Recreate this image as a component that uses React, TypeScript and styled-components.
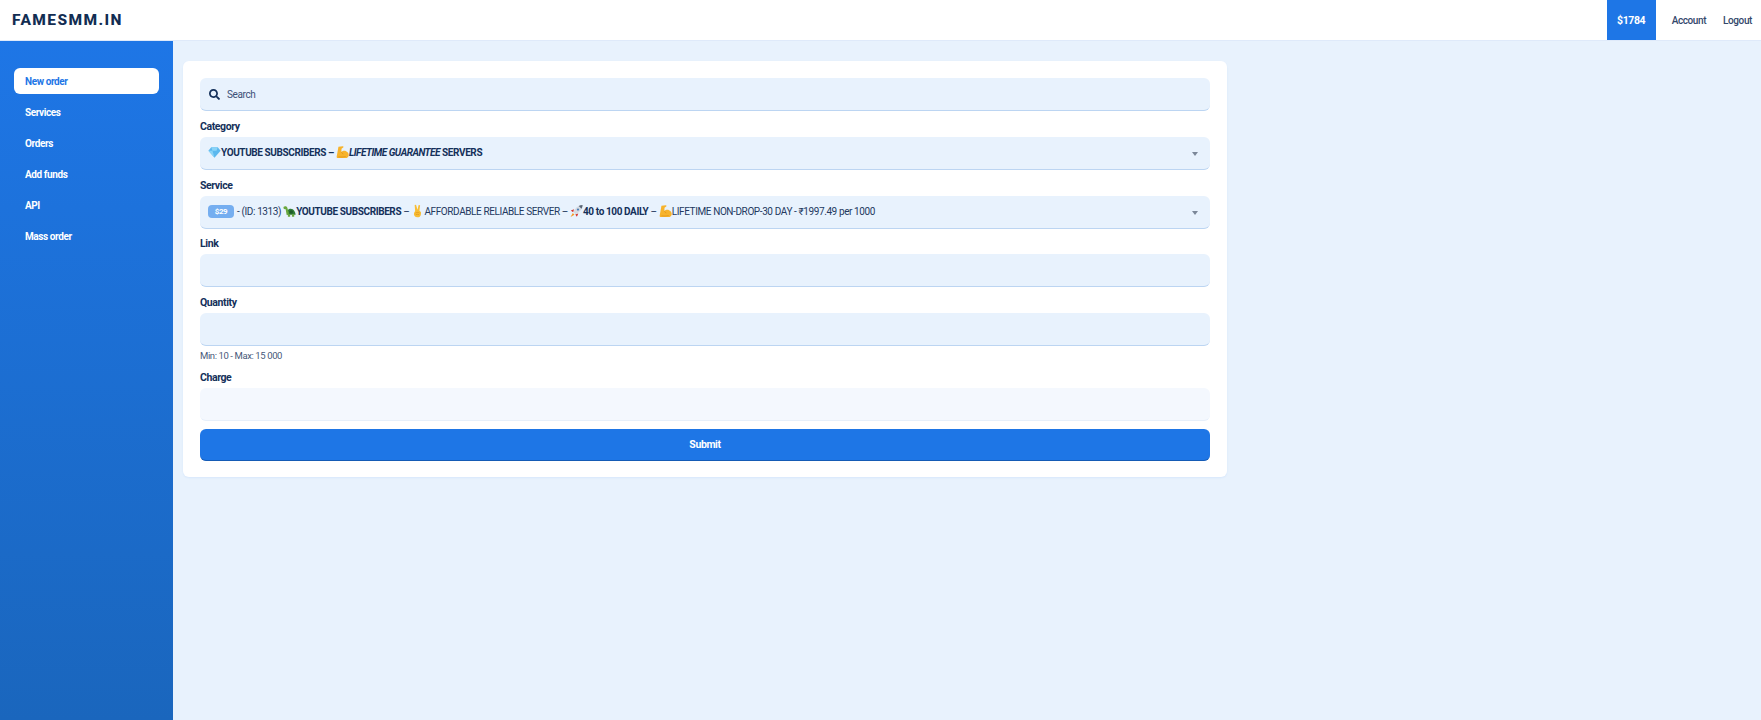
import styled, { createGlobalStyle } from 'styled-components';

const GlobalStyle = createGlobalStyle`
    html, body {
        margin: 0;
        padding: 0;
        height: 100%;
    }
    body {
        background: #e8f2fd;
        color: #14305a;
        font-family: 'Roboto', 'Noto Sans', sans-serif;
        font-size: 10px;
        letter-spacing: -0.4px;
    }
    * {
        box-sizing: border-box;
    }
`;

const Page = styled.div`
    display: flex;
    flex-direction: column;
    height: 720px;
    overflow: hidden;
`;

const Navbar = styled.header`
    display: flex;
    align-items: stretch;
    justify-content: space-between;
    height: 41px;
    background: #fff;
    border-bottom: 1px solid #dfeafa;
`;

const Logo = styled.div`
    display: flex;
    align-items: center;
    padding-left: 12px;
    font-size: 15.5px;
    font-weight: 800;
    letter-spacing: 1.4px;
    color: #122d52;
`;

const NavRight = styled.nav`
    display: flex;
    align-items: stretch;
    padding-right: 9px;
`;

const Balance = styled.div`
    display: flex;
    align-items: center;
    justify-content: center;
    width: 49px;
    background: #1e76e6;
    color: #fff;
    font-weight: 700;
    font-size: 10.5px;
`;

const NavLink = styled.a`
    display: flex;
    align-items: center;
    margin-left: ${p => (p.$last ? '17px' : '16px')};
    color: #33476b;
    font-size: 10px;
    font-weight: 500;
`;

const Body = styled.div`
    display: flex;
    flex: 1;
    min-height: 0;
`;

const Sidebar = styled.aside`
    display: flex;
    flex-direction: column;
    gap: 5px;
    width: 173px;
    padding: 27px 14px 0;
    background: linear-gradient(180deg, #1e76e6 0%, #1a66bd 100%);
`;

const SideItem = styled.a`
    display: flex;
    align-items: center;
    height: 26px;
    padding-left: 11px;
    border-radius: 6px;
    font-size: 10px;
    font-weight: 700;
    color: ${p => (p.$active ? '#1e76e6' : '#fff')};
    background: ${p => (p.$active ? '#fff' : 'transparent')};
`;

const Main = styled.main`
    flex: 1;
    padding: 20px 10px 0;
`;

const Card = styled.section`
    width: 1044px;
    padding: 17px 17px 16px;
    background: #fff;
    border-radius: 6px;
    box-shadow: 0 1px 2px rgba(30, 118, 230, 0.08);
`;

const Group = styled.div`
    margin-bottom: 6.75px;
`;

const Label = styled.label`
    display: block;
    height: 19px;
    line-height: 17px;
    font-size: 10.5px;
    font-weight: 700;
    color: #14305a;
`;

const Field = styled.div`
    display: flex;
    align-items: center;
    position: relative;
    height: 33px;
    padding: 0 8px;
    border-radius: 6px;
    background: ${p => (p.$readOnly ? '#f4f8fe' : '#e8f2fd')};
    border-bottom: 1.5px solid ${p => (p.$readOnly ? '#e6effa' : '#bcd5f2')};
    color: #24395f;
    white-space: nowrap;
`;

const SearchIcon = styled.svg`
    width: 11px;
    height: 11px;
    margin: 0 7px 0 1px;
    flex: none;
`;

const Placeholder = styled.span`
    color: #3b5076;
`;

const Caret = styled.span`
    position: absolute;
    top: 15px;
    right: 12px;
    border-style: solid;
    border-width: 4px 3px 0;
    border-color: #7b8798 transparent transparent;
`;

const Strong = styled.b`
    font-weight: 700;
    color: #14305a;
    white-space: pre;
`;

const Emph = styled.i`
    font-weight: 700;
    font-style: italic;
    letter-spacing: -0.5px;
    color: #14305a;
`;

const Badge = styled.span`
    display: inline-flex;
    align-items: center;
    justify-content: center;
    width: 26px;
    height: 13px;
    margin-right: 1px;
    border-radius: 4px;
    background: #75aef0;
    color: #fff;
    font-size: 8px;
    font-weight: 700;
`;

const Emoji = styled.svg`
    width: 13px;
    height: 14px;
    flex: none;
    margin: 0 0 1px;
`;

const Text = styled.span`
    white-space: pre;
`;

const Hint = styled.div`
    height: 16.25px;
    padding-top: 3px;
    line-height: 13px;
    font-size: 9.5px;
    color: #47597a;
`;

const Submit = styled.button`
    display: block;
    width: 100%;
    height: 32px;
    margin-top: 8px;
    border: 0;
    border-bottom: 1.5px solid #155bb5;
    border-radius: 6px;
    background: #1e76e6;
    color: #fff;
    font-family: inherit;
    font-size: 10.5px;
    letter-spacing: -0.4px;
    font-weight: 700;
`;

const Diamond = () => (
    <Emoji viewBox="0 0 16 16">
        <path d="M4 2h8l3.500 4.500L8 15 .5 6.500z" fill="#5cb8ee" />
        <path d="M4 2h8l-1.500 4.500h-5zM.5 6.500h5L8 15z" fill="#8ad3f7" />
    </Emoji>
);

const Muscle = () => (
    <Emoji viewBox="0 0 16 16">
        <path
            d="M3 1.500 8.500 1c.8 0 1 1.200.3 1.600L6.800 4 6.600 8c1.500-1.600 4-2 5.800-1 2.200 1 3.300 2.800 3.300 4.600 0 2.400-1.800 3.900-4.300 3.900H2.500c-1.200 0-1.800-.7-1.700-1.800z"
            fill="#f7b32b"
        />
        <path d="M6.400 8.200c1.200.6 2 1.400 2.400 2.600M3 14c3 .4 6 .3 9-.4" stroke="#d98a12" strokeWidth=".7" fill="none" />
    </Emoji>
);

const Turtle = () => (
    <Emoji viewBox="0 0 16 16">
        <path d="M5.500 7.500c1.800-3 6.500-3 8.500.5 1 1.700 1.500 3.200 1.500 4.500H5z" fill="#2f7a35" />
        <path d="M.5 3c1.500-1.500 4-1.200 4.700.8L7.500 11 4.500 13 3.300 5.800 1 5.500z" fill="#6aa83e" />
        <path d="M6 12h2.800v3H6zM11 12h2.800v3H11z" fill="#6aa83e" />
        <path d="M7.500 8.500l2.500-1.800 2.500 1.800-1 2.500h-3z" fill="#1f5c2a" />
    </Emoji>
);

const Victory = () => (
    <Emoji viewBox="0 0 16 16">
        <path d="M4.500.6l1.700-.3 1.800 6.200L9.400.5l1.800.3-.8 7 1.800 1.300c.5 3.700-.6 6.500-4.200 6.500-3.200 0-4.900-2-4.300-5.200l1.400-2.300z" fill="#f8bd35" />
        <path d="M5.500 10.500c1.500-1 3.500-1 5 0M5.800 12.500c1.300-.6 2.800-.6 4.200 0" stroke="#d98a12" strokeWidth=".7" fill="none" />
    </Emoji>
);

const Rocket = () => (
    <Emoji viewBox="0 0 16 16">
        <path d="M15.500.5c-4 .2-7 2-9.500 5.500l-2 3 3 3 3-2C13.500 7.500 15.300 4.500 15.500.5z" fill="#d5dae2" />
        <path d="M15.500.5c-1.800.1-3.400.5-4.800 1.300l3.500 3.500c.8-1.400 1.200-3 1.300-4.800z" fill="#5a6675" />
        <circle cx="9.800" cy="6.200" r="1.400" fill="#4b7fb5" />
        <path d="M5 5.800 1 7.500l2.800 2zM10.200 11 8.500 15l-2-2.800z" fill="#d5352c" />
        <path d="M3.500 10.500l2 2-4.800 3z" fill="#f59a23" />
    </Emoji>
);

const menu = ['New order', 'Services', 'Orders', 'Add funds', 'API', 'Mass order'];

const App = () => {
    return (
        <Page>
            <GlobalStyle />
            <Navbar>
                <Logo>FAMESMM.IN</Logo>
                <NavRight>
                    <Balance>$1784</Balance>
                    <NavLink>Account</NavLink>
                    <NavLink $last>Logout</NavLink>
                </NavRight>
            </Navbar>
            <Body>
                <Sidebar>
                    {menu.map((item, i) => (
                        <SideItem key={item} $active={i === 0}>
                            {item}
                        </SideItem>
                    ))}
                </Sidebar>
                <Main>
                    <Card>
                        <Group>
                            <Field>
                                <SearchIcon viewBox="0 0 512 512">
                                    <path
                                        d="M505 442.700 405.300 343c-4.500-4.500-10.600-7-17-7H372c27.600-35.300 44-79.700 44-128C416 93.100 322.900 0 208 0S0 93.100 0 208s93.100 208 208 208c48.300 0 92.700-16.400 128-44v16.300c0 6.400 2.500 12.500 7 17l99.700 99.700c9.400 9.400 24.600 9.400 33.900 0l28.300-28.300c9.400-9.400 9.400-24.600.1-34zM208 336c-70.700 0-128-57.200-128-128 0-70.700 57.200-128 128-128 70.700 0 128 57.200 128 128 0 70.700-57.200 128-128 128z"
                                        fill="#14305a"
                                    />
                                </SearchIcon>
                                <Placeholder>Search</Placeholder>
                            </Field>
                        </Group>
                        <Group>
                            <Label>Category</Label>
                            <Field>
                                <Diamond />
                                <Strong>YOUTUBE SUBSCRIBERS – </Strong>
                                <Muscle />
                                <Emph>LIFETIME GUARANTEE</Emph>
                                <Strong> SERVERS</Strong>
                                <Caret />
                            </Field>
                        </Group>
                        <Group>
                            <Label>Service</Label>
                            <Field>
                                <Badge>$29</Badge>
                                <Text> - (ID: 1313) </Text>
                                <Turtle />
                                <Strong>YOUTUBE SUBSCRIBERS</Strong>
                                <Text> – </Text>
                                <Victory />
                                <Text>AFFORDABLE RELIABLE SERVER – </Text>
                                <Rocket />
                                <Strong>40 to 100 DAILY</Strong>
                                <Text> – </Text>
                                <Muscle />
                                <Text>LIFETIME NON-DROP-30 DAY - ₹1997.49 per 1000</Text>
                                <Caret />
                            </Field>
                        </Group>
                        <Group>
                            <Label>Link</Label>
                            <Field />
                        </Group>
                        <Group>
                            <Label>Quantity</Label>
                            <Field />
                            <Hint>Min: 10 - Max: 15 000</Hint>
                        </Group>
                        <Group>
                            <Label>Charge</Label>
                            <Field $readOnly />
                        </Group>
                        <Submit>Submit</Submit>
                    </Card>
                </Main>
            </Body>
        </Page>
    );
};

export default App;
